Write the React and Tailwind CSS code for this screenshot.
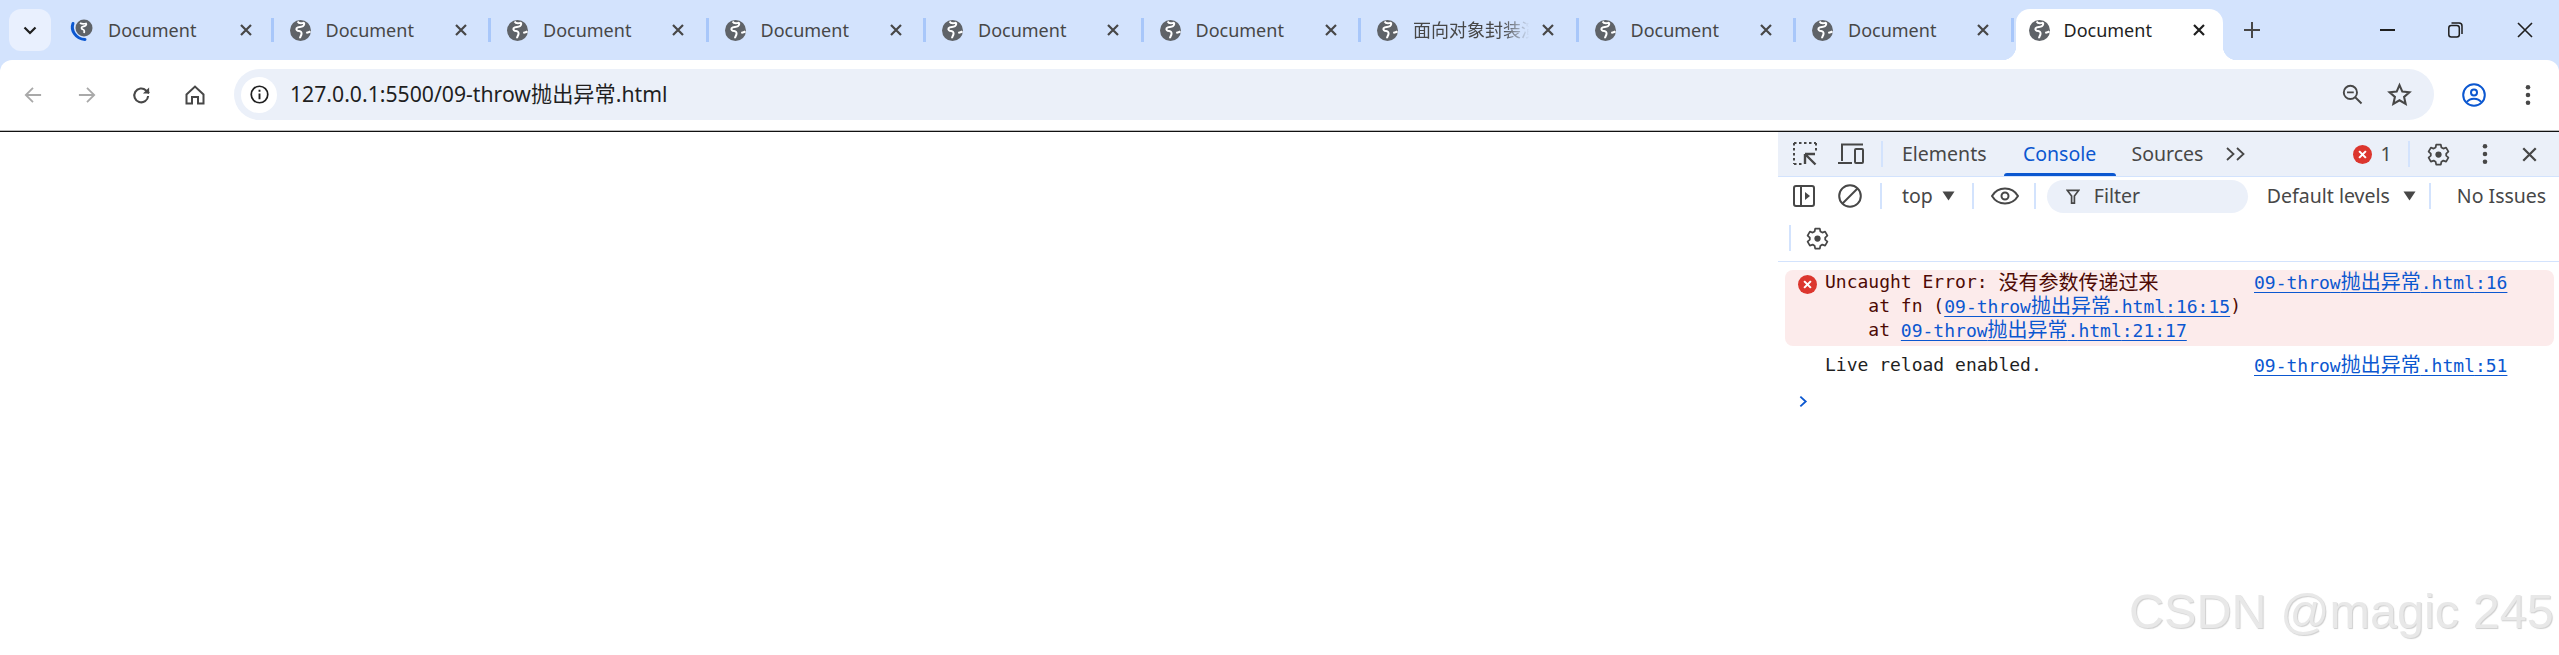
const sans = 'font-["Noto_Sans","Noto_Sans_CJK_SC",sans-serif]';

const Globe = ({ className = 'w-[21px] h-[21px]' }) => (
  <svg viewBox="0 0 22 22" className={className}>
    <circle cx="11" cy="11" r="11" fill="#5f6368" />
    <path d="M8 1.500c1 2 4 2 6 1.500 1.500 0 1 2.500-.5 3.500-2 1.200-5 .5-6.500 2-1 1.500.5 3 2.500 3 2 .2 3 1.500 2.500 3.500-.3 1.500-1.500 2.500-1.500 4" fill="none" stroke="#fff" strokeWidth="2.100" />
    <path d="M17 13.500c1.500-.5 3-.5 4.500-1.500" fill="none" stroke="#fff" strokeWidth="2.100" />
  </svg>
);

const SpinnerGlobe = () => (
  <svg viewBox="0 0 28 28" className="w-[28px] h-[28px]">
    <circle cx="16" cy="12" r="8.500" fill="#5f6368" />
    <path d="M12 7c2 1.500 4 1 6 .5 1 1-.5 3-3 3-2 .5-2 2.500 0 3 1.500.5 1.500 2 1 3.500" fill="none" stroke="#fff" strokeWidth="1.800" />
    <path d="M5 7.500C2.500 14 7.500 23 17 23.500" fill="none" stroke="#0b57d0" strokeWidth="3" strokeLinecap="round" />
  </svg>
);

const Cross = ({ size = 'w-[12px] h-[12px]', stroke = '#474747', width = 2.200 }) => (
  <svg viewBox="0 0 12 12" className={size}>
    <path d="M1 1l10 10M11 1L1 11" stroke={stroke} strokeWidth={width} fill="none" />
  </svg>
);

const Tab = ({ title, first }) => (
  <div className="flex items-center h-[42px] w-[217.500px] shrink-0 relative">
    {first ? (
      <div className="ml-[13px] w-[28px] flex justify-center"><SpinnerGlobe /></div>
    ) : (
      <div className="ml-[17px] w-[21px] flex justify-center"><Globe /></div>
    )}
    <div className={`${first ? 'ml-[12px] w-[123px]' : 'ml-[15px] w-[120px]'} overflow-hidden whitespace-nowrap text-[18px] leading-[24px] text-[#474747] ${title === 'Document' ? '' : 'mask-[linear-gradient(to_right,#000_75%,transparent_97%)]'}`}>
      {title}
    </div>
    <div className="ml-[9px]"><Cross /></div>
    <div className="ml-auto w-[3px] h-[24px] bg-[#a8c7fa] mr-[-1px]" />
  </div>
);

const Sep = ({ className = 'h-[26px]' }) => <div className={`w-[2px] bg-[#d3e3fd] shrink-0 ${className}`} />;

const Caret = () => (
  <svg viewBox="0 0 12 10" className="w-[13px] h-[10px]"><path d="M0 .5h12L6 9.500z" fill="#474747" /></svg>
);

const Gear = () => (
  <svg viewBox="0 0 24 24" className="w-[25px] h-[25px]" fill="none">
    <path d="M9.800 2.500h4.400l.6 2.800 1.800 1 2.700-.9 2.200 3.800-2.100 1.900v2l2.100 1.900-2.200 3.800-2.700-.9-1.800 1-.6 2.800H9.800l-.6-2.800-1.800-1-2.700.9-2.200-3.800 2.100-1.900v-2L2.500 9.200l2.200-3.800 2.700.9 1.800-1z" stroke="#474747" strokeWidth="1.700" strokeLinejoin="round" />
    <circle cx="12" cy="12" r="3" fill="#474747" />
  </svg>
);

const Kebab = ({ color = '#474747' }) => (
  <svg viewBox="0 0 6 24" className="w-[6px] h-[22px]" fill={color}>
    <circle cx="3" cy="3.500" r="2.500" /><circle cx="3" cy="12" r="2.500" /><circle cx="3" cy="20.500" r="2.500" />
  </svg>
);

const ErrorDot = ({ size = 'w-[19px] h-[19px]' }) => (
  <svg viewBox="0 0 18 18" className={size}>
    <circle cx="9" cy="9" r="9" fill="#dc362e" />
    <path d="M5.800 5.800l6.400 6.400M12.200 5.800l-6.400 6.400" stroke="#fff" strokeWidth="2" />
  </svg>
);

const CJK = ({ children }) => <span className='text-[20px] font-["Noto_Sans_CJK_SC",sans-serif]'>{children}</span>;

const FileLink = ({ suffix }) => (
  <span className="text-[#0b57d0] underline underline-offset-[3px]">09-throw<CJK>抛出异常</CJK>.html{suffix}</span>
);

const BrowserChrome = () => (
  <>
    <div className="h-[60px] bg-[#d3e3fd] flex items-start pt-[9px]">
      <div className="ml-[9px] w-[42px] h-[42px] rounded-[12px] bg-[#e9f0fe] flex items-center justify-center shrink-0">
        <svg viewBox="0 0 14 9" className="w-[14px] h-[9px]"><path d="M1.500 1.500L7 7l5.500-5.500" stroke="#1f1f1f" strokeWidth="2.200" fill="none" /></svg>
      </div>
      <div className="ml-[4px] flex">
        <Tab title="Document" first />
        {['Document', 'Document', 'Document', 'Document', 'Document', '面向对象封装演示', 'Document', 'Document'].map((t, i) => (
          <Tab key={i} title={t} />
        ))}
      </div>
      {/* active tab sits on the toolbar */}
      <div className="ml-[3px] w-[207px] h-[51px] bg-white rounded-t-[14px] flex items-center shrink-0 relative">
        <div className="absolute left-[-14px] bottom-0 w-[14px] h-[14px] bg-[radial-gradient(circle_at_0_0,#d3e3fd_14px,#fff_14.500px)]" />
        <div className="absolute right-[-14px] bottom-0 w-[14px] h-[14px] bg-[radial-gradient(circle_at_100%_0,#d3e3fd_14px,#fff_14.500px)]" />
        <div className="ml-[13px] mb-[9px]"><Globe /></div>
        <div className="ml-[14px] mb-[9px] w-[120px] text-[18px] leading-[24px] text-[#1f1f1f]">Document</div>
        <div className="ml-[9px] mb-[9px]"><Cross stroke="#1f1f1f" /></div>
      </div>
      <div className="ml-[21px] h-[42px] flex items-center">
        <svg viewBox="0 0 16 16" className="w-[16px] h-[16px]"><path d="M8 0v16M0 8h16" stroke="#474747" strokeWidth="2" /></svg>
      </div>
      <div className="ml-auto h-[42px] flex items-center pr-[26px]">
        <div className="w-[15px] h-[2px] bg-[#1f1f1f]" />
        <svg viewBox="0 0 15 16" className="ml-[53px] w-[15px] h-[16px]" fill="none" stroke="#1f1f1f" strokeWidth="1.500">
          <rect x=".8" y="3.500" width="10.500" height="11.500" rx="2.500" />
          <path d="M3.500 1h7.500a3 3 0 0 1 3 3v8" />
        </svg>
        <svg viewBox="0 0 16 16" className="ml-[54px] w-[16px] h-[16px]"><path d="M1 1l14 14M15 1L1 15" stroke="#1f1f1f" strokeWidth="1.600" fill="none" /></svg>
      </div>
    </div>
    <div className="h-[70px] bg-[#d3e3fd]">
      <div className="h-[70px] bg-white rounded-t-[12px] flex items-center">
        <div className="w-[234px] flex items-center shrink-0">
          <svg viewBox="0 0 20 20" className="ml-[24px] w-[18px] h-[18px]" fill="none" stroke="#a9a9a9" strokeWidth="2"><path d="M19 10H2M10 2l-8 8 8 8" /></svg>
          <svg viewBox="0 0 20 20" className="ml-[36px] w-[18px] h-[18px]" fill="none" stroke="#a9a9a9" strokeWidth="2"><path d="M1 10h17M10 2l8 8-8 8" /></svg>
          <svg viewBox="0 0 20 20" className="ml-[36px] w-[19px] h-[19px]" fill="none" stroke="#474747" strokeWidth="2.200"><path d="M17 10.500A7.300 7.300 0 1 1 14.800 4.700L18 7.500" /><path d="M18 1.500V8h-6.500" strokeWidth="0" fill="#474747" /></svg>
          <svg viewBox="0 0 20 20" className="ml-[34px] w-[20px] h-[20px]" fill="none" stroke="#474747" strokeWidth="2"><path d="M1.500 9.500L10 1.500l8.500 8V18.500h-5.500v-6.500H7v6.500H1.500z" /></svg>
        </div>
        <div className="w-[2200px] h-[51px] mb-[1px] bg-[#ebf0f9] rounded-full flex items-center shrink-0">
          <div className="ml-[7px] w-[36px] h-[36px] rounded-full bg-white flex items-center justify-center">
            <svg viewBox="0 0 20 20" className="w-[19px] h-[19px]" fill="none" stroke="#1f1f1f" strokeWidth="1.800"><circle cx="10" cy="10" r="8.700" /><path d="M10 9v6M10 5v2" strokeWidth="2" /></svg>
          </div>
          <div className="ml-[13px] mb-[2px] text-[21.200px] leading-[26px] text-[#1f1f1f] whitespace-nowrap">127.0.0.1:5500/09-throw抛出异常.html</div>
          <svg viewBox="0 0 20 20" className="ml-auto w-[21px] h-[21px]" fill="none" stroke="#474747" strokeWidth="1.800"><circle cx="8" cy="8" r="6.300" /><path d="M4.800 8h6.400M12.600 12.600l6 6" /></svg>
          <svg viewBox="0 0 24 24" className="ml-[24px] mr-[22px] w-[25px] h-[25px]" fill="none" stroke="#474747" strokeWidth="2" strokeLinejoin="miter"><path d="M12 3l2.700 6.200 6.800.6-5.100 4.500 1.500 6.700-5.900-3.500-5.900 3.500 1.500-6.700L2.500 9.800l6.800-.6z" /></svg>
        </div>
        <svg viewBox="0 0 24 24" className="ml-[28px] w-[24px] h-[24px]" fill="none" stroke="#0b57d0" strokeWidth="2"><circle cx="12" cy="12" r="10.800" /><circle cx="12" cy="9.500" r="3" /><path d="M4.800 19c3-4.500 11.400-4.500 14.400 0" /></svg>
        <div className="ml-[39px]"><Kebab /></div>
      </div>
    </div>
    <div className="h-[2px] bg-[#111] border-t border-[#bbb]" />
  </>
);

const DevTools = () => (
  <div className={`w-[781px] shrink-0 ${sans} text-[#474747] text-[19.500px]`}>
    <div className="h-[44px] bg-[#ebf0f9] flex items-center">
      <svg viewBox="0 0 24 24" className="ml-[15px] w-[24px] h-[24px]" fill="none" stroke="#474747">
        <path d="M1 1h22M1 1v21" strokeWidth="2" strokeDasharray="2.500 2.500" />
        <path d="M23 1v9M1 22h9" strokeWidth="2" strokeDasharray="2.500 2.500" />
        <path d="M12 12h10M12 12v10M12.500 12.500l10 10" strokeWidth="2.400" />
      </svg>
      <svg viewBox="0 0 28 22" className="ml-[20px] w-[28px] h-[22px]" fill="none" stroke="#474747" strokeWidth="2">
        <path d="M5 18V1.500h21M1 20h14" /><rect x="18" y="6" width="8" height="14" rx="1" />
      </svg>
      <div className="ml-[16px] h-[26px]"><Sep /></div>
      <div className="ml-[19px]">Elements</div>
      <div className="ml-[17px] w-[112px] h-[44px] flex items-center justify-center text-[#0b57d0] relative">
        Console
        <div className="absolute bottom-0 left-0 right-0 h-[3px] rounded-t-[3px] bg-[#0b57d0]" />
      </div>
      <div className="ml-[16px]">Sources</div>
      <svg viewBox="0 0 20 14" className="ml-[23px] w-[20px] h-[14px]" fill="none" stroke="#474747" strokeWidth="1.800"><path d="M1 1l6.500 6L1 13M11 1l6.500 6L11 13" /></svg>
      <div className="ml-auto flex items-center">
        <ErrorDot />
        <div className="ml-[8.500px] w-[10px]">1</div>
        <div className="ml-[17px]"><Sep /></div>
        <div className="ml-[16.500px]"><Gear /></div>
        <div className="ml-[30.500px]"><Kebab /></div>
        <div className="ml-[34.500px] mr-[22px]"><Cross size="w-[15px] h-[15px]" width={1.800} /></div>
      </div>
    </div>
    <div className="h-[1px] bg-[#d3e3fd]" />
    <div className="h-[38px] flex items-center">
      <svg viewBox="0 0 22 22" className="ml-[15px] w-[22px] h-[22px]" fill="none" stroke="#474747" strokeWidth="2"><rect x="1" y="1" width="20" height="20" rx="2" /><path d="M8 1v20" /><path d="M12 7l5 4-5 4z" fill="#474747" strokeWidth="0" /></svg>
      <svg viewBox="0 0 24 24" className="ml-[23px] w-[24px] h-[24px]" fill="none" stroke="#474747" strokeWidth="2"><circle cx="12" cy="12" r="10.800" /><path d="M19.500 4.500l-15 15" /></svg>
      <div className="ml-[18px]"><Sep /></div>
      <div className="ml-[20px]">top</div>
      <div className="ml-[9px]"><Caret /></div>
      <div className="ml-[17px]"><Sep /></div>
      <svg viewBox="0 0 28 18" className="ml-[17px] w-[28px] h-[18px]" fill="none" stroke="#474747" strokeWidth="2"><path d="M1 9c6-10 20-10 26 0-6 10-20 10-26 0z" /><circle cx="14" cy="9" r="3.500" /></svg>
      <div className="ml-[15px]"><Sep /></div>
      <div className="ml-[11px] w-[201px] h-[33px] rounded-full bg-[#ebf0f9] flex items-center">
        <svg viewBox="0 0 14 16" className="ml-[19px] w-[14px] h-[15px]" fill="none" stroke="#474747" strokeWidth="1.800"><path d="M1 1.500h12L8.500 7.500V15h-3V7.500z" /></svg>
        <div className="ml-[14px]">Filter</div>
      </div>
      <div className="ml-[19px] whitespace-nowrap">Default levels</div>
      <div className="ml-[13px]"><Caret /></div>
      <div className="ml-[13px]"><Sep /></div>
      <div className="ml-[26px] whitespace-nowrap">No Issues</div>
    </div>
    <div className="h-[47px] flex items-center border-b border-[#d3e3fd]">
      <div className="ml-[11px]"><Sep /></div>
      <div className="ml-[14px]"><Gear /></div>
    </div>
    <div className='pt-[8px] text-[18px] leading-[24px] font-["DejaVu_Sans_Mono",monospace] text-[#1f1f1f]'>
      <div className="relative ml-[7px] mr-[5px] h-[76px] bg-[#fcebeb] rounded-[8px] text-[#4d0a05] whitespace-pre flex">
        <div className="w-[40px] shrink-0 pl-[12.500px] pt-[5px]"><ErrorDot /></div>
        <div className="w-[429px] shrink-0">
          <div className="flex items-center h-[24px]">Uncaught Error: <CJK>没有参数传递过来</CJK></div>
          <div className="h-[24px] flex items-center">{'    at fn ('}<FileLink suffix=":16:15" />)</div>
          <div className="h-[24px] flex items-center">{'    at '}<FileLink suffix=":21:17" /></div>
        </div>
        <div className="h-[24px] flex items-center"><FileLink suffix=":16" /></div>
      </div>
      <div className="mt-[7px] h-[24px] ml-[47px] flex items-center whitespace-pre">
        <div className="w-[429px]">Live reload enabled.</div>
        <FileLink suffix=":51" />
      </div>
      <div className="mt-[12px] ml-[21px] h-[24px] flex items-center">
        <svg viewBox="0 0 10 14" className="w-[9px] h-[13px]" fill="none" stroke="#0b57d0" strokeWidth="2"><path d="M1.500 1.500L7.500 7l-6 5.500" /></svg>
      </div>
    </div>
  </div>
);

export default function App() {
  return (
    <div className={`relative h-[655px] w-[2559px] overflow-hidden bg-white ${sans}`}>
      <BrowserChrome />
      <div className="flex">
        <div className="flex-1" />
        <DevTools />
      </div>
      <div className="absolute left-[2129px] top-[583px] font-['Liberation_Sans',sans-serif] text-[48.600px] leading-[56px] text-[#e8e8e8] whitespace-nowrap [text-shadow:1px_1px_1px_#cfcfcf]">
        CSDN @magic 245
      </div>
    </div>
  );
}
